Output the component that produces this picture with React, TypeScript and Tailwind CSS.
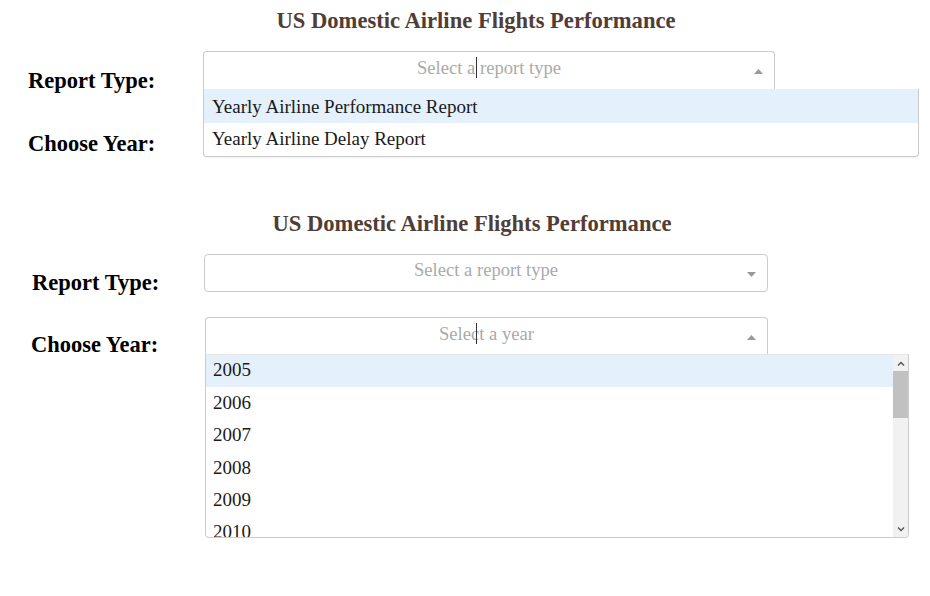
import React from "react";

const serif = "font-['Liberation_Serif',_'Times_New_Roman',_serif]";

const Caret = ({ up }: { up?: boolean }) => (
  <svg width="9" height="5" viewBox="0 0 9 5" className="block">
    {up ? <path d="M0 5 L4.5 0 L9 5 Z" fill="#999" /> : <path d="M0 0 L4.5 5 L9 0 Z" fill="#999" />}
  </svg>
);

const Select = ({
  placeholder,
  width,
  open,
  cursorLeft,
}: {
  placeholder: string;
  width: string;
  open?: boolean;
  cursorLeft?: string;
}) => (
  <div
    className={`relative h-[38px] ${width} border border-[#ccc] bg-white ${
      open ? "rounded-t-[4px] border-b-0" : "rounded-[4px]"
    }`}
  >
    <div className="flex h-full items-center justify-center pb-[6px] text-[18.6px] text-[#aaa]">
      <span className="relative">
        {placeholder}
        {cursorLeft && <span className={`absolute top-[3px] h-[21px] w-px bg-[#333] ${cursorLeft}`} />}
      </span>
    </div>
    <div className="absolute right-[11px] top-[17px]">
      <Caret up={open} />
    </div>
  </div>
);

const Label = ({ children, className }: { children: React.ReactNode; className: string }) => (
  <div className={`text-[22.5px] font-bold leading-[28px] text-black ${className}`}>{children}</div>
);

export default function App() {
  const years = ["2005", "2006", "2007", "2008", "2009", "2010"];
  return (
    <div className={`h-[596px] w-[930px] bg-white ${serif}`}>
      {/* first panel */}
      <h1 className="pl-[22px] pt-[7px] text-center text-[22.6px] font-bold leading-[28px] text-[#503D36]">
        US Domestic Airline Flights Performance
      </h1>
      <div className="mt-[16px] flex">
        <div className="w-[203px] shrink-0 pl-[28px]">
          <Label className="mt-[16px]">Report Type:</Label>
        </div>
        <div className="relative">
          <Select placeholder="Select a report type" width="w-[572px]" open cursorLeft="left-[59px]" />
          <div className="absolute left-0 top-[38px] z-10 w-[716px] overflow-hidden rounded-b-[4px] border border-t-0 border-[#ccc] bg-white text-[19px] text-[#1a1a1a] shadow-[0_1px_1px_rgba(0,0,0,0.06)]">
            <div className="flex h-[34px] items-center bg-[#e4f1fd] pl-[8px] pt-[2px]">Yearly Airline Performance Report</div>
            <div className="flex h-[33px] items-center pl-[8px] pb-[1px]">Yearly Airline Delay Report</div>
          </div>
        </div>
      </div>
      <div className="pl-[28px]">
        <Label className="mt-[35px]">Choose Year:</Label>
      </div>

      {/* second panel */}
      <h1 className="mt-[52px] pl-[14px] text-center text-[22.6px] font-bold leading-[28px] text-[#503D36]">
        US Domestic Airline Flights Performance
      </h1>
      <div className="mt-[16px] flex">
        <div className="w-[204px] shrink-0 pl-[32px]">
          <Label className="mt-[15px]">Report Type:</Label>
        </div>
        <Select placeholder="Select a report type" width="w-[564px]" />
      </div>
      <div className="mt-[20px] flex">
        <div className="w-[205px] shrink-0 pl-[31px]">
          <Label className="mt-[14px]">Choose Year:</Label>
        </div>
        <div className="relative">
          <Select placeholder="Select a year" width="w-[563px]" open cursorLeft="left-[37px]" />
          <div className="absolute left-0 top-[37px] z-10 flex h-[184px] w-[704px] overflow-hidden rounded-b-[4px] border border-[#ccc] border-t-[#e6e6e6] bg-white text-[19px] text-[#1a1a1a]">
            <div className="flex-1 overflow-hidden">
              {years.map((y, i) => (
                <div
                  key={y}
                  className={`flex h-[32.4px] shrink-0 items-center pl-[7px] pb-[1px] ${i === 0 ? "bg-[#e4f1fd]" : ""}`}
                >
                  {y}
                </div>
              ))}
            </div>
            <div className="flex w-[15px] flex-col items-center bg-[#f1f1f1]">
              <div className="flex h-[16px] items-center justify-center">
                <svg width="8" height="5" viewBox="0 0 8 5">
                  <path d="M1 4.5 L4 1.5 L7 4.5" stroke="#505050" strokeWidth="1.3" fill="none" />
                </svg>
              </div>
              <div className="h-[47px] w-[15px] bg-[#c1c1c1]" />
              <div className="flex-1" />
              <div className="flex h-[16px] items-center justify-center">
                <svg width="8" height="5" viewBox="0 0 8 5">
                  <path d="M1 0.5 L4 3.5 L7 0.5" stroke="#505050" strokeWidth="1.3" fill="none" />
                </svg>
              </div>
            </div>
          </div>
        </div>
      </div>
    </div>
  );
}
